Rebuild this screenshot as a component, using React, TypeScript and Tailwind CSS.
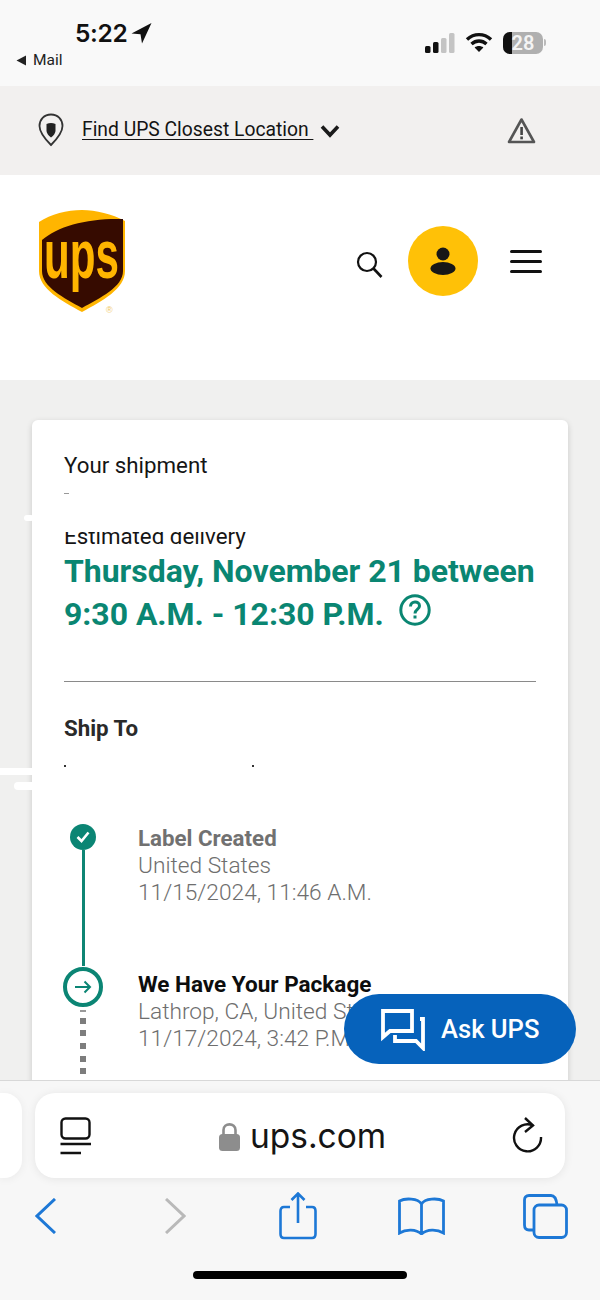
const FONT = "font-['Roboto',sans-serif]";

function StatusBar() {
  return (
    <div className="h-[86px] bg-[#f9f9f9] flex justify-between pl-[16px] pr-[54px]">
      <div className="pt-[17px]">
        <div className="flex items-center pl-[59px] h-[32px]">
          <span className="font-['Inter',sans-serif] font-semibold text-[24.5px] leading-[32px] text-[#111] tracking-[-0.3px]">5:22</span>
          <svg width="21" height="22" viewBox="0 0 21 22" className="ml-[3px]">
            <path d="M20.5 1 L0.5 11.5 L9.5 12.2 L11 21.5 Z" fill="#111" />
          </svg>
        </div>
        <div className="flex items-center mt-[1px] h-[20px]">
          <svg width="11" height="11" viewBox="0 0 11 11" className="mr-[6px]">
            <path d="M10 0.5 V10.5 L0.5 5.5 Z" fill="#222" />
          </svg>
          <span className="text-[15.5px] leading-[20px] text-[#222]">Mail</span>
        </div>
      </div>
      <div className="flex items-center gap-[10px] pb-[1px]">
        <svg width="30" height="20" viewBox="0 0 30 20">
          <rect x="0" y="13" width="5.5" height="7" rx="1.5" fill="#111" />
          <rect x="8" y="9" width="5.5" height="11" rx="1.5" fill="#111" />
          <rect x="16" y="5" width="5.5" height="15" rx="1.5" fill="#c4c4c4" />
          <rect x="24" y="0" width="5.5" height="20" rx="1.5" fill="#c4c4c4" />
        </svg>
        <svg width="28" height="21" viewBox="0 0 28 21" fill="none" stroke="#111" strokeWidth="3.4">
          <path d="M2 7.5 C9 1 19 1 26 7.5" />
          <path d="M6.5 12 C11 8 17 8 21.5 12" />
          <path d="M14 20 L9.6 15.6 C12 13.6 16 13.6 18.4 15.6 Z" fill="#111" stroke="none" />
        </svg>
        <div className="relative flex items-center">
          <div className="w-[40px] h-[22px] rounded-[7px] bg-[#b0b0b0] overflow-hidden flex items-center justify-center relative">
            <div className="absolute left-0 top-0 bottom-0 w-[9px] bg-[#111]" />
            <span className="relative text-[20px] leading-[22px] font-semibold text-[#f4f4f4]">28</span>
          </div>
          <div className="w-[2px] h-[7px] ml-[1px] bg-[#bbb] rounded-r-full" />
        </div>
      </div>
    </div>
  );
}

function LocationBar() {
  return (
    <div className="h-[89px] bg-[#f2f0ef] flex items-center justify-between pl-[38px] pr-[64px]">
      <div className="flex items-center">
        <svg width="26" height="34" viewBox="0 0 26 34" className="mr-[18px] mt-[-2px]">
          <path d="M13 1.5 C6 1.5 1.5 6.5 1.5 13 C1.5 20 8 27 13 32 C18 27 24.5 20 24.5 13 C24.5 6.5 20 1.5 13 1.5 Z" fill="none" stroke="#333" strokeWidth="1.8" />
          <path d="M8.5 11 Q13 9 17.5 11 V18 Q17 21.5 13 24.5 Q9 21.5 8.5 18 Z" fill="#222" />
        </svg>
        <span className="text-[19.3px] leading-[28px] text-[#141414] underline underline-offset-[3px] whitespace-pre mt-[-2px]">Find UPS Closest Location </span>
        <svg width="20" height="14" viewBox="0 0 20 14" fill="none" stroke="#1a1a1a" strokeWidth="3.6" className="ml-[7px] mt-[1px]">
          <path d="M2 2.5 L10 11 L18 2.5" />
        </svg>
      </div>
      <svg width="29" height="27" viewBox="0 0 29 27" className="mt-[-1px]">
        <path d="M14.5 2.5 L27 25 H2 Z" fill="none" stroke="#555" strokeWidth="2.6" strokeLinejoin="round" />
        <rect x="13.3" y="10" width="2.6" height="8" fill="#444" />
        <rect x="13.3" y="19.5" width="2.6" height="2.8" fill="#444" />
      </svg>
    </div>
  );
}

function UpsLogo() {
  return (
    <svg width="88" height="106" viewBox="0 0 88 106">
      <path d="M1 13 C13 5 29 1 44 1 C58 1 74 5 87 12 V62 C87 80 64 92 44 103 C24 92 1 80 1 62 Z" fill="#ffb500" />
      <path d="M4 31 C20 17 50 9 85 10 V62 C85 78 62 89 44 99 C26 89 4 78 4 62 Z" fill="#360b00" />
      <text transform="translate(6 69) scale(0.62 1)" fontFamily="'Liberation Sans', sans-serif" fontWeight="700" fontSize="68" fill="#ffb500">ups</text>
      <text x="68" y="104" fontFamily="'Liberation Sans', sans-serif" fontSize="9" fill="#f0c860">®</text>
    </svg>
  );
}

function Header() {
  return (
    <div className="h-[205px] bg-white flex items-start justify-between pl-[38px] pr-[58px] pt-[34px]">
      <UpsLogo />
      <div className="flex items-center mt-[17px]">
        <svg width="27" height="27" viewBox="0 0 27 27" fill="none" stroke="#111" strokeWidth="2.2" className="mt-[6px] mr-[25px]">
          <circle cx="11" cy="11" r="9" />
          <path d="M17.5 17.5 L25.5 26" strokeWidth="2.6" />
        </svg>
        <div className="w-[70px] h-[70px] rounded-full bg-[#ffc107] flex items-center justify-center">
          <svg width="26" height="28" viewBox="0 0 26 28">
            <circle cx="13" cy="7" r="6.5" fill="#171717" />
            <ellipse cx="13" cy="21.5" rx="12.5" ry="6.5" fill="#171717" />
          </svg>
        </div>
        <div className="ml-[32px] flex flex-col gap-[7px] w-[32px]">
          <div className="h-[3px] rounded-full bg-[#111]" />
          <div className="h-[3px] rounded-full bg-[#111]" />
          <div className="h-[3px] rounded-full bg-[#111]" />
        </div>
      </div>
    </div>
  );
}

function Timeline() {
  return (
    <div className="flex ml-[-1px]">
      <div className="w-[40px] flex flex-col items-center">
        <div className="w-[26px] h-[26px] rounded-full bg-[#0b8574] flex items-center justify-center shrink-0">
          <svg width="14" height="12" viewBox="0 0 14 12" fill="none" stroke="#fff" strokeWidth="2.6">
            <path d="M1.5 6 L5.5 10 L12.5 1.5" />
          </svg>
        </div>
        <div className="w-[3px] h-[116px] bg-[#0f8574] shrink-0" />
        <div className="w-[40px] h-[40px] rounded-full border-[4px] border-[#0b8574] flex items-center justify-center shrink-0 mt-[1px]">
          <svg width="18" height="14" viewBox="0 0 18 14" fill="none" stroke="#0b8574" strokeWidth="2">
            <path d="M1 7 H16 M10.5 1.5 L16 7 L10.5 12.5" />
          </svg>
        </div>
        <div className="w-[6px] h-[2px] bg-[#9a9a9a] mt-[3px] shrink-0" />
        <div className="flex flex-col gap-[6.7px] mt-[6px] shrink-0">
          {[0, 1, 2, 3, 4].map((i) => (
            <div key={i} className="w-[6px] h-[6px] bg-[#7d7d7d]" />
          ))}
        </div>
      </div>
      <div className="pl-[35px] pt-[1px] text-[22.7px] leading-[27px] font-light text-[#6e6e6e] whitespace-nowrap">
        <div className="font-bold text-[22.3px] text-[#717171]">Label Created</div>
        <div>United States</div>
        <div>11/15/2024, 11:46 A.M.</div>
        <div className="font-bold text-[22.5px] text-[#0d0d0d] mt-[65px]">We Have Your Package</div>
        <div>Lathrop, CA, United States</div>
        <div>11/17/2024, 3:42 P.M.</div>
      </div>
    </div>
  );
}

function Card() {
  return (
    <div className="relative w-[536px] mx-auto mt-[40px] bg-white rounded-t-[6px] shadow-[0_2px_6px_rgba(0,0,0,0.16)] pl-[32px] pr-[32px] pt-[30px] h-[700px]">
      <div className="text-[22.3px] leading-[30px] text-[#151515]">Your shipment</div>
      <div className="w-[5px] h-[1px] bg-[#999] mt-[13px]" />
      <div className="mt-[27px] text-[22.3px] leading-[30px] text-[#151515] whitespace-nowrap">Estimated delivery</div>
      <div className="text-[32px] leading-[43px] font-bold text-[#0a8672] mt-[-1px] whitespace-nowrap tracking-[-0.03px]">
        <div>Thursday, November 21 between</div>
        <div className="flex items-center">
          <span>9:30 A.M. - 12:30 P.M.</span>
          <svg width="32" height="32" viewBox="0 0 32 32" fill="none" stroke="#0a8672" strokeWidth="3" className="ml-[15px] mt-[-10px]">
            <circle cx="16" cy="16" r="14.2" />
            <path d="M11.5 12.5 C11.5 6.5 20.5 6.5 20.5 12 C20.5 15.5 16 15.5 16 19.5" />
            <rect x="14.5" y="21.5" width="3" height="3" fill="#0a8672" stroke="none" />
          </svg>
        </div>
      </div>
      <div className="h-[1.5px] bg-[#8a8a8a] mt-[44.5px]" />
      <div className="text-[22.3px] leading-[30px] font-bold text-[#2a2a2a] mt-[31px]">Ship To</div>
      <div className="flex items-center h-[4px] mt-[21px] mb-[55.5px]">
        <div className="w-[2px] h-[2px] bg-[#333]" />
        <div className="w-[2px] h-[2px] bg-[#333] ml-[186px]" />
      </div>
      <Timeline />
      {/* white redaction marks from the original photo */}
      <div className="absolute left-[30px] top-[95px] w-[240px] h-[17px] bg-white" />
      <div className="absolute left-[-8px] top-[95px] w-[10px] h-[6px] rounded-full bg-white" />
      <div className="absolute left-[-32px] top-[348px] w-[32px] h-[7px] bg-white" />
      <div className="absolute left-[-18px] top-[362px] w-[18px] h-[8px] rounded-l-full bg-white" />
    </div>
  );
}

function AskUps() {
  return (
    <div className="absolute right-[24px] bottom-[16px] w-[232px] h-[70px] rounded-full bg-[#0662bb] flex items-center pl-[37px]">
      <svg width="44" height="44" viewBox="0 0 44 44" fill="none" stroke="#fff" strokeWidth="3.8">
        <path d="M2 4 H31 V24 H9 L2 30 Z" />
        <path d="M39 12 H42 V41 L35 34 H14 V28" />
      </svg>
      <span className="ml-[16px] text-[25.6px] leading-[30px] font-medium text-white">Ask UPS</span>
    </div>
  );
}

function SafariBar() {
  return (
    <div className="h-[220px] bg-[#f7f7f7] border-t border-[#d8d8d8]">
      <div className="flex gap-[13px] pt-[12px]">
        <div className="w-[22px] h-[85px] bg-white rounded-r-[18px] shadow-[0_1px_10px_rgba(0,0,0,0.06)]" />
        <div className="w-[530px] h-[85px] bg-white rounded-[20px] shadow-[0_1px_10px_rgba(0,0,0,0.08)] flex items-center justify-between pl-[25px] pr-[22px]">
          <svg width="31" height="38" viewBox="0 0 31 38" fill="none" stroke="#111" strokeWidth="2.4">
            <rect x="1.5" y="1.5" width="28" height="20" rx="4" />
            <path d="M0.5 27 H31 M0.5 36 H21" />
          </svg>
          <div className="flex items-center ml-[2px] mt-[1px]">
            <svg width="21" height="29" viewBox="0 0 21 29" className="mr-[10px]">
              <path d="M4.5 13 V8 C4.5 0.5 16.5 0.5 16.5 8 V13" fill="none" stroke="#8d8d8d" strokeWidth="2.6" />
              <rect x="0" y="12" width="21" height="17" rx="3.5" fill="#8d8d8d" />
            </svg>
            <span className="font-['Inter',sans-serif] text-[33.5px] leading-[44px] text-[#151515]">ups.com</span>
          </div>
          <svg width="31" height="37" viewBox="0 0 31 37" fill="none" stroke="#111" strokeWidth="2.4">
            <path d="M21 8.5 A13.5 13.5 0 1 0 29 20" />
            <path d="M13 1 L21 8.5 L13 15" />
          </svg>
        </div>
      </div>
      <div className="flex items-center pl-[35px] h-[58px] mt-[9px]">
        <svg width="21" height="36" viewBox="0 0 21 36" fill="none" stroke="#1d78d6" strokeWidth="3">
          <path d="M20 1 L2 18 L20 35" />
        </svg>
        <svg width="21" height="36" viewBox="0 0 21 36" fill="none" stroke="#b9b9b9" strokeWidth="3" className="ml-[109px]">
          <path d="M1 1 L19 18 L1 35" />
        </svg>
        <svg width="38" height="48" viewBox="0 0 38 48" fill="none" stroke="#1d78d6" strokeWidth="2.6" className="ml-[93px]">
          <path d="M11 15 H5 Q1.5 15 1.5 19 V42 Q1.5 46 5 46 H33 Q36.5 46 36.5 42 V19 Q36.5 15 33 15 H27" />
          <path d="M19 31 V2 M12.5 8 L19 1.5 L25.5 8" />
        </svg>
        <svg width="47" height="38" viewBox="0 0 47 38" fill="none" stroke="#1d78d6" strokeWidth="2.8" className="ml-[81px]">
          <path d="M23.5 36 V7 C20 1 7 1 1.5 4 V36 C8 32 18 32 23.5 37 C29 32 39 32 45.5 36 V4 C40 1 27 1 23.5 7" />
        </svg>
        <svg width="45" height="45" viewBox="0 0 45 45" fill="none" stroke="#1d78d6" strokeWidth="2.8" className="ml-[78px]">
          <path d="M11 36 H6 Q1.5 36 1.5 31 V6 Q1.5 1.5 6 1.5 H28 Q33 1.5 34 11" />
          <rect x="11" y="11" width="32.5" height="32.5" rx="5" />
        </svg>
      </div>
      <div className="w-[214px] h-[8px] rounded-full bg-black mx-auto mt-[26px]" />
    </div>
  );
}

export default function App() {
  return (
    <div className={`w-[600px] h-[1300px] overflow-hidden ${FONT}`}>
      <StatusBar />
      <LocationBar />
      <Header />
      <div className="relative h-[700px] bg-[#f0f0ef] overflow-hidden">
        <Card />
        <AskUps />
      </div>
      <SafariBar />
    </div>
  );
}
